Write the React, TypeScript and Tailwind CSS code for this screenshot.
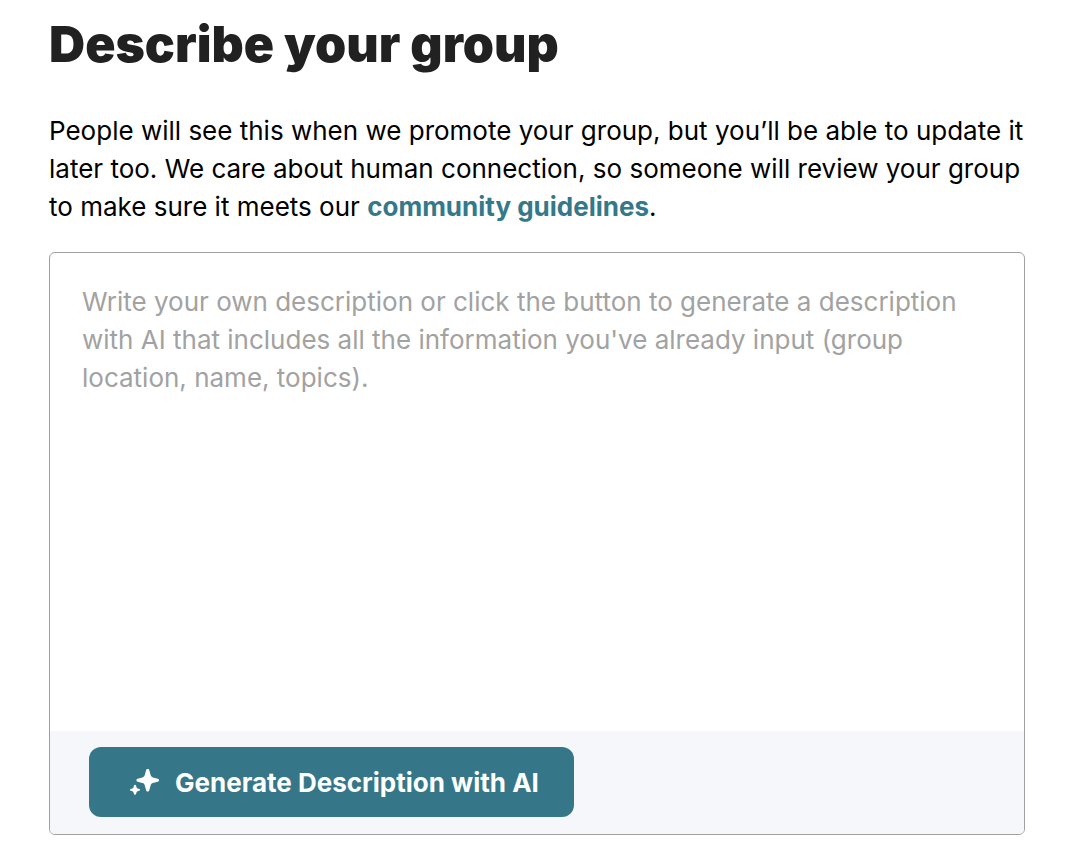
import { useState } from 'react';

function SparklesIcon() {
  return (
    <svg
      width="30"
      height="30"
      viewBox="0 0 30 30"
      fill="currentColor"
      aria-hidden="true"
    >
      <path d="M18.7 1.9c.9 0 1.4.5 1.600 1.300l1.300 4.800c.4 1.300 1.100 2 2.400 2.400l4.800 1.300c.7.200 1.200.7 1.200 1.500s-.5 1.300-1.200 1.500l-4.800 1.300c-1.300.4-2 1.100-2.400 2.400l-1.300 4.900c-.2.800-.7 1.300-1.600 1.300s-1.400-.5-1.600-1.300l-1.300-4.900c-.4-1.300-1.100-2-2.400-2.400l-4.800-1.300c-.7-.2-1.200-.7-1.200-1.500s.5-1.300 1.200-1.500l4.800-1.300c1.300-.4 2-1.100 2.400-2.400l1.300-4.800c.2-.8.700-1.300 1.600-1.300z" />
      <path d="M6 17.800c.5 0 .8.300 1 .8l.5 1.700c.2.600.5.900 1.100 1.100l1.700.5c.5.200.8.400.8.900s-.3.800-.8 1l-1.700.5c-.6.200-.9.500-1.100 1.100l-.5 1.700c-.2.500-.5.800-1 .8s-.8-.3-1-.8l-.5-1.700c-.2-.6-.5-.9-1.100-1.100l-1.700-.5c-.5-.2-.8-.5-.8-1s.3-.7.800-.9l1.700-.5c.6-.2.900-.5 1.100-1.100l.5-1.700c.2-.5.500-.8 1-.8z" />
    </svg>
  );
}

export default function App() {
  const [description, setDescription] = useState('');

  return (
    <main className="min-h-screen bg-white pt-[14px] pr-[43px] pb-5 pl-[49px] font-['Inter',sans-serif] text-black">
      <h1 className="text-[50px] leading-[60px] font-black text-[#212121]">
        Describe your group
      </h1>

      <p className="mt-[38px] -mr-2 text-[26px] leading-[38px]">
        People will see this when we promote your group, but you’ll be able to
        update it later too. We care about human connection, so someone will
        review your group to make sure it meets our{' '}
        <a href="#guidelines" className="font-bold text-[#34798a]">
          community guidelines
        </a>
        .
      </p>

      <div className="mt-[26px] overflow-hidden rounded-md border border-[#a0a0a0]">
        <textarea
          aria-label="Group description"
          value={description}
          onChange={(e) => setDescription(e.target.value)}
          placeholder="Write your own description or click the button to generate a description with AI that includes all the information you've already input (group location, name, topics)."
          className="block h-[478px] w-full resize-none px-8 py-[30px] text-[26px] leading-[38px] outline-none placeholder:text-[#a2a2a2]"
        />
        <div className="bg-[#f6f7fa] px-[39px] pt-4 pb-[17px]">
          <button
            type="button"
            className="flex h-[70px] items-center gap-4 rounded-xl bg-[#357788] pr-[35px] pl-10 text-[26px] font-bold text-white"
          >
            <SparklesIcon />
            Generate Description with AI
          </button>
        </div>
      </div>
    </main>
  );
}
